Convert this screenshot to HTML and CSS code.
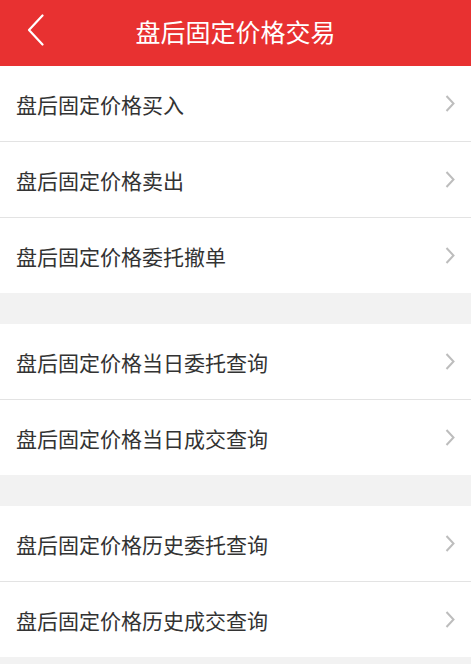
FILE: index.html
```html
<!DOCTYPE html>
<html>
<head lang="zh">
    <meta charset="UTF-8">
    <title>盘后固定价格交易</title>
    <link rel="stylesheet" href="styles.css">
</head>
<body>
<div id="header">
    <span class="back">
        <svg width="17" height="32" viewBox="0 0 17 32"><polyline points="15.5,1.5 2,16 15.5,30.5" fill="none" stroke="#fff" stroke-width="2.2" stroke-linecap="round" stroke-linejoin="round"/></svg>
    </span>
    <h1>盘后固定价格交易</h1>
</div>

<ul class="group">
    <li><span>盘后固定价格买入</span><i class="arrow"><svg width="10" height="17" viewBox="0 0 10 17"><polyline points="1.5,1 8.5,8.5 1.5,16" fill="none" stroke="#bdbdbd" stroke-width="2"/></svg></i></li>
    <li><span>盘后固定价格卖出</span><i class="arrow"><svg width="10" height="17" viewBox="0 0 10 17"><polyline points="1.5,1 8.5,8.5 1.5,16" fill="none" stroke="#bdbdbd" stroke-width="2"/></svg></i></li>
    <li><span>盘后固定价格委托撤单</span><i class="arrow"><svg width="10" height="17" viewBox="0 0 10 17"><polyline points="1.5,1 8.5,8.5 1.5,16" fill="none" stroke="#bdbdbd" stroke-width="2"/></svg></i></li>
</ul>

<ul class="group">
    <li><span>盘后固定价格当日委托查询</span><i class="arrow"><svg width="10" height="17" viewBox="0 0 10 17"><polyline points="1.5,1 8.5,8.5 1.5,16" fill="none" stroke="#bdbdbd" stroke-width="2"/></svg></i></li>
    <li><span>盘后固定价格当日成交查询</span><i class="arrow"><svg width="10" height="17" viewBox="0 0 10 17"><polyline points="1.5,1 8.5,8.5 1.5,16" fill="none" stroke="#bdbdbd" stroke-width="2"/></svg></i></li>
</ul>

<ul class="group">
    <li><span>盘后固定价格历史委托查询</span><i class="arrow"><svg width="10" height="17" viewBox="0 0 10 17"><polyline points="1.5,1 8.5,8.5 1.5,16" fill="none" stroke="#bdbdbd" stroke-width="2"/></svg></i></li>
    <li><span>盘后固定价格历史成交查询</span><i class="arrow"><svg width="10" height="17" viewBox="0 0 10 17"><polyline points="1.5,1 8.5,8.5 1.5,16" fill="none" stroke="#bdbdbd" stroke-width="2"/></svg></i></li>
</ul>
</body>
</html>
```

FILE: styles.css
```css
*{
    margin: 0;
    padding: 0;
}
ul{
    list-style: none;
}
svg{
    display: block;
}
body{
    background: #f2f2f2;
    font-family: "Noto Sans CJK SC", "Noto Sans", sans-serif;
    color: #333;
}
#header{
    position: relative;
    height: 66px;
    background: #e83131;
    display: flex;
    align-items: center;
    justify-content: center;
    padding-bottom: 4px;
    box-sizing: border-box;
}
#header .back{
    position: absolute;
    left: 27px;
    top: 14px;
    display: block;
}
#header h1{
    font-size: 25px;
    font-weight: normal;
    color: #fff;
    line-height: 1;
}
.group{
    background: #fff;
    margin-bottom: 31px;
}
.group li{
    height: 75px;
    display: flex;
    align-items: center;
    justify-content: space-between;
    padding: 0 16px 0 16px;
    border-bottom: 1px solid #e3e3e3;
    font-size: 21px;
}
.group li:last-child{
    border-bottom: none;
}
.arrow{
    display: block;
}
```
